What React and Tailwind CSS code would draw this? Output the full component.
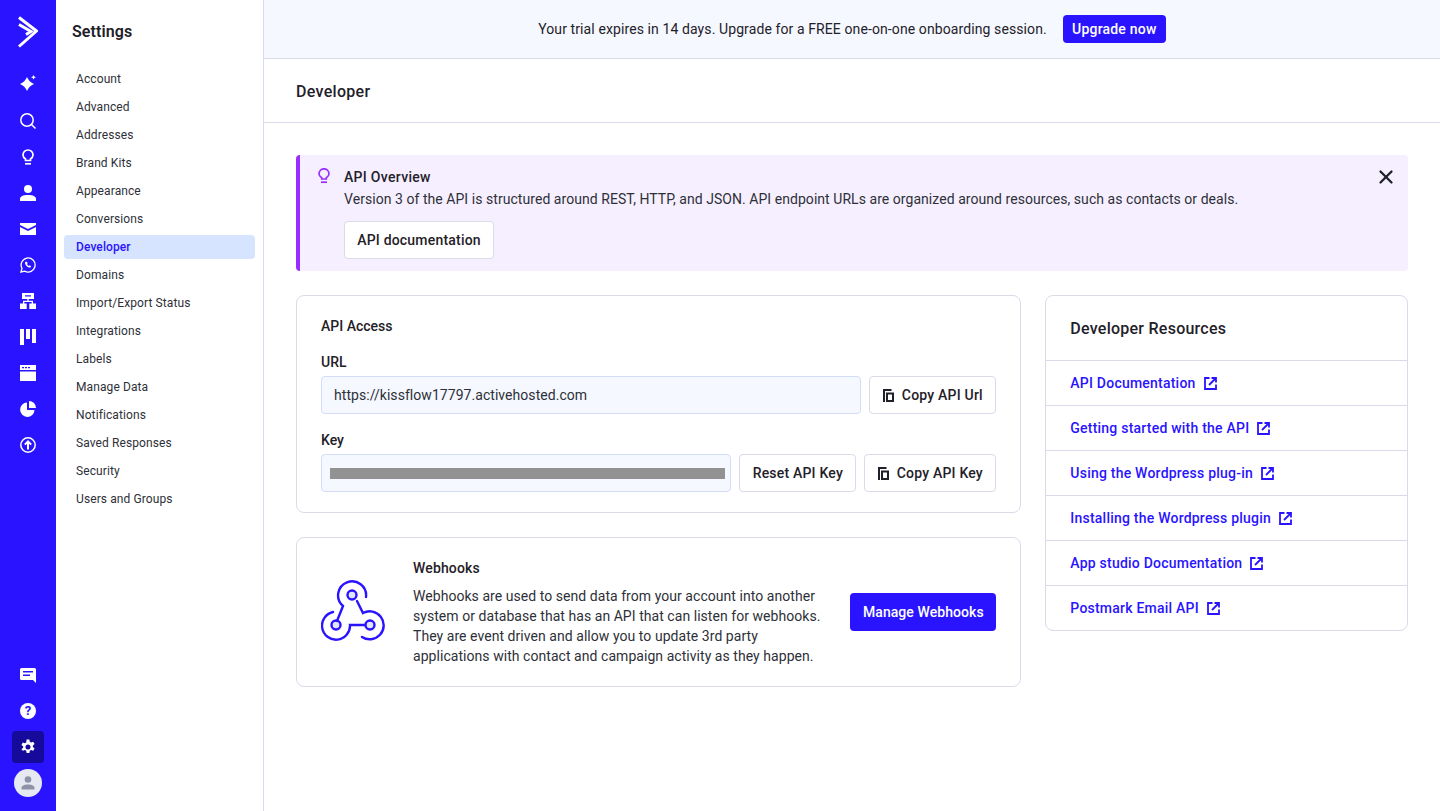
import { X } from "lucide-react";

const settingsLinks = [
  "Account",
  "Advanced",
  "Addresses",
  "Brand Kits",
  "Appearance",
  "Conversions",
  "Developer",
  "Domains",
  "Import/Export Status",
  "Integrations",
  "Labels",
  "Manage Data",
  "Notifications",
  "Saved Responses",
  "Security",
  "Users and Groups",
];

const resources = [
  "API Documentation",
  "Getting started with the API",
  "Using the Wordpress plug-in",
  "Installing the Wordpress plugin",
  "App studio Documentation",
  "Postmark Email API",
];

const Svg = ({ children, className = "w-4 h-4" }) => (
  <svg viewBox="0 0 16 16" fill="currentColor" className={className}>
    {children}
  </svg>
);

const CopyIcon = () => (
  <svg viewBox="0 0 11 13" className="w-[11px] h-[13px] text-[#1f2129]" fill="currentColor">
    <path d="M0 0h8.500v2H2v11H0z" />
    <path fillRule="evenodd" d="M3 3.500h8V13H3zm2 2V11h4V5.500z" />
  </svg>
);

const ExternalIcon = () => (
  <svg viewBox="0 0 13 13" className="w-[13px] h-[13px] shrink-0" fill="none" stroke="currentColor" strokeWidth="1.800">
    <path d="M5.500 1H1v11h11V7.500" />
    <path d="M5 8 11.500 1.500M7.500 1H12v4.500" />
  </svg>
);

const Rail = () => (
  <div className="w-14 shrink-0 bg-[#2a14ff] text-white flex flex-col items-center justify-between">
    <div className="flex flex-col items-center w-full">
      <div className="h-[63px] flex items-center justify-center">
        <svg viewBox="0 0 20 32" className="w-5 h-8" fill="none" stroke="currentColor" strokeWidth="3">
          <path d="M1 1.500 18.500 15 1 30.500" strokeLinejoin="round" />
          <path d="M1 8.500 13 15.500 8 18.500" />
        </svg>
      </div>
      <div className="h-10 flex items-center justify-center">
        <Svg>
          <path d="M7 2Q9 7 14 9 9 11 7 16 5 11 0 9 5 7 7 2z" />
          <path d="M13.500 0l.8 1.500 1.700.8-1.700.8-.8 1.500-.8-1.500-1.700-.8 1.700-.8z" />
        </Svg>
      </div>
      <div className="h-9 flex items-center justify-center">
        <svg viewBox="0 0 16 16" className="w-4 h-4" fill="none" stroke="currentColor" strokeWidth="1.500">
          <circle cx="7" cy="7" r="6.200" />
          <path d="M11.500 11.500 15.500 15.500" />
        </svg>
      </div>
      <div className="h-9 flex items-center justify-center">
        <svg viewBox="0 0 16 16" className="w-4 h-4" fill="none" stroke="currentColor" strokeWidth="1.700">
          <path d="M5.500 11.500V10C4 9 3 7.700 3 6a5 5 0 0 1 10 0c0 1.700-1 3-2.500 4v1.500z" />
          <path d="M5 14.800h6" />
        </svg>
      </div>
      <div className="h-9 flex items-center justify-center">
        <Svg>
          <circle cx="8" cy="4" r="4" />
          <path d="M0 16v-2c0-2.500 3-4 8-4s8 1.500 8 4v2z" />
        </Svg>
      </div>
      <div className="h-9 flex items-center justify-center">
        <Svg>
          <path d="M0 2h16v2l-8 4-8-4z" />
          <path d="M0 6l8 4 8-4v8H0z" />
        </Svg>
      </div>
      <div className="h-9 flex items-center justify-center">
        <svg viewBox="0 0 16 16" className="w-4 h-4" fill="none" stroke="currentColor" strokeWidth="1.300">
          <path d="M1 15l1-3.600A7 7 0 1 1 4.700 14.100z" />
          <path d="M5.500 4.700c-.8.8-.6 2.200.6 3.700 1.300 1.500 2.800 2.400 3.900 2.100.7-.2 1.100-.8 1-1.300L9.700 8.300l-.8.700c-.8-.3-1.500-1-1.900-1.900l.7-.8-.8-1.600c-.5-.1-1 0-1.400.000z" fill="currentColor" stroke="none" />
        </svg>
      </div>
      <div className="h-9 flex items-center justify-center">
        <Svg>
          <path fillRule="evenodd" d="M2 0h12v6H8.700v1.700H13v2.900h3V16H9.300v-5.400h2.400V9H4.300v1.600h2.400V16H0v-5.400h3V7.700h4.300V6H2zm3 2.300v1.200h6V2.300z" />
        </Svg>
      </div>
      <div className="h-9 flex items-center justify-center">
        <Svg>
          <path d="M0 0h4v16H0zM6 0h4v10H6zM12 0h4v14h-4z" />
        </Svg>
      </div>
      <div className="h-9 flex items-center justify-center">
        <Svg>
          <path fillRule="evenodd" d="M0 0h16v5H0zm2 2v1.200h2V2zm3 0v1.200h2V2zm3 0v1.200h2V2z" />
          <path d="M0 6.500h16V16H0z" />
        </Svg>
      </div>
      <div className="h-9 flex items-center justify-center">
        <Svg>
          <path d="M7 1.500V9h7.500A7.200 7.200 0 1 1 7 1.500z" />
          <path d="M9 0a7 7 0 0 1 7 7H9z" />
        </Svg>
      </div>
      <div className="h-9 flex items-center justify-center">
        <svg viewBox="0 0 16 16" className="w-4 h-4" fill="none" stroke="currentColor" strokeWidth="1.500">
          <circle cx="8" cy="8" r="7.200" />
          <path d="M8 12.500V4.500M4.800 7.600 8 4.500l3.200 3.100" strokeWidth="2" />
        </svg>
      </div>
    </div>
    <div className="flex flex-col items-center w-full pb-[10px]">
      <div className="h-9 flex items-center justify-center">
        <Svg>
          <path fillRule="evenodd" d="M1.500 1h13A1.500 1.500 0 0 1 16 2.500V16l-3-3H1.500A1.500 1.500 0 0 1 0 11.500v-9A1.500 1.500 0 0 1 1.500 1zM3 4v1.500h10V4zm0 3.500V9h7V7.500z" />
        </Svg>
      </div>
      <div className="h-9 flex items-center justify-center">
        <div className="w-4 h-4 rounded-full bg-white text-[#2a14ff] text-[13px] font-bold leading-4 text-center">?</div>
      </div>
      <div className="h-9 flex items-center justify-center">
        <div className="w-8 h-8 rounded bg-[#150a99] flex items-center justify-center">
          <Svg>
            <path fillRule="evenodd" d="M6.600 0h2.800l.4 2.200 1.300.7 2.100-.8 1.400 2.400-1.700 1.400v1.500l1.700 1.400-1.400 2.400-2.100-.8-1.300.7-.4 2.200H6.600l-.4-2.200-1.300-.7-2.100.8L1.400 9.600l1.700-1.400V6.700L1.400 5.300l1.400-2.400 2.100.8 1.300-.7zM8 5a2.500 2.500 0 1 0 0 5 2.500 2.500 0 0 0 0-5z" transform="translate(0 .6)" />
          </Svg>
        </div>
      </div>
      <div className="h-9 flex items-center justify-center">
        <div className="w-7 h-7 rounded-full bg-[#e6e9f2] flex items-center justify-center text-[#8d92a6]">
          <Svg>
            <circle cx="8" cy="4.500" r="3.300" />
            <path d="M1.500 14.500V13c0-2 2.500-3.500 6.500-3.500s6.500 1.500 6.500 3.500v1.500z" />
          </Svg>
        </div>
      </div>
    </div>
  </div>
);

const SettingsNav = () => (
  <div className="w-[208px] shrink-0 border-r border-[#d9dbe8] px-2">
    <div className="pl-2 pt-[22px] h-[65px] text-base font-semibold leading-5 tracking-[0.1px] text-[#1f2129]">Settings</div>
    <div className="flex flex-col">
      {settingsLinks.map((name) => (
        <div key={name} className="h-7 flex items-center">
          <div
            className={
              name === "Developer"
                ? "w-[191px] h-6 rounded px-3 flex items-center text-xs font-medium tracking-[0.1px] bg-[#d6e4ff] text-[#2a14ff]"
                : "w-[191px] h-6 rounded px-3 flex items-center text-xs tracking-[0.1px] text-[#2e3038]"
            }
          >
            {name}
          </div>
        </div>
      ))}
    </div>
  </div>
);

const Button = ({ children, className = "" }) => (
  <div className={`h-[38px] rounded border border-[#d9dbe8] bg-white flex items-center justify-center gap-2 whitespace-nowrap text-sm font-medium tracking-[0.2px] text-[#1f2129] ${className}`}>
    {children}
  </div>
);

const ApiAccess = () => (
  <div className="h-[218px] rounded-lg border border-[#d9dbe8] px-6 pt-5">
    <div className="text-sm font-medium leading-5 text-[#1f2129]">API Access</div>
    <div className="mt-4 text-sm font-medium leading-5 text-[#1f2129]">URL</div>
    <div className="mt-1 flex gap-2">
      <div className="flex-1 h-[38px] rounded border border-[#d3ddf7] bg-[#f5f8ff] px-3 flex items-center text-sm tracking-[0.05px] text-[#2e3038]">
        https://kissflow17797.activehosted.com
      </div>
      <Button className="w-[127px]">
        <CopyIcon />
        Copy API Url
      </Button>
    </div>
    <div className="mt-4 text-sm font-medium leading-5 text-[#1f2129]">Key</div>
    <div className="mt-1 flex gap-2">
      <div className="flex-1 h-[38px] rounded border border-[#d3ddf7] bg-[#f5f8ff] pl-2 pr-[5px] flex items-center">
        <div className="w-full h-[11px] bg-[#929292]" />
      </div>
      <Button className="w-[117px]">Reset API Key</Button>
      <Button className="w-[132px]">
        <CopyIcon />
        Copy API Key
      </Button>
    </div>
  </div>
);

const Webhooks = () => (
  <div className="h-[150px] rounded-lg border border-[#d9dbe8] px-6 flex items-center">
    <svg viewBox="0 0 64 62" className="w-16 h-[62px] -mt-1 shrink-0 text-[#2a14ff]" fill="none" stroke="currentColor" strokeWidth="2.400" strokeLinecap="round">
      <circle cx="31" cy="16" r="4.500" fill="#e0e6ff" />
      <circle cx="15" cy="46" r="4.500" fill="#e0e6ff" />
      <circle cx="49" cy="46" r="4.500" fill="#e0e6ff" />
      <path d="M45 18A14 14 0 1 0 22 27L16 42" />
      <path d="M36 22 42 34A14 14 0 1 1 41 58" />
      <path d="M12 33A14 14 0 1 0 29 46H44" />
    </svg>
    <div className="ml-7 w-[412px]">
      <div className="text-sm font-medium leading-5 tracking-[0.15px] text-[#1f2129]">Webhooks</div>
      <p className="mt-2 text-sm leading-5 tracking-[0.05px] text-[#2e3038]">
        Webhooks are used to send data from your account into another system or database that has an API that can listen for webhooks. They are event driven and allow you to update 3rd party applications with contact and campaign activity as they happen.
      </p>
    </div>
    <div className="ml-auto w-[146px] h-[38px] rounded bg-[#2a14ff] text-white text-sm font-medium tracking-[0.07px] flex items-center justify-center whitespace-nowrap">Manage Webhooks</div>
  </div>
);

const Resources = () => (
  <div className="rounded-lg border border-[#d9dbe8] self-start">
    <div className="h-[64px] px-6 pt-[2px] flex items-center text-base font-medium tracking-[0.25px] text-[#1f2129]">Developer Resources</div>
    {resources.map((name) => (
      <div key={name} className="h-[45px] px-6 flex items-center gap-2 border-t border-[#d9dbe8] text-sm font-medium tracking-[0.22px] text-[#2a14ff]">
        {name}
        <ExternalIcon />
      </div>
    ))}
  </div>
);

export default function App() {
  return (
    <div className="h-[811px] flex bg-white overflow-hidden font-['Roboto',sans-serif]">
      <Rail />
      <SettingsNav />
      <div className="flex-1 min-w-0">
        <div className="h-[59px] bg-[#f5f8ff] border-b border-[#d9dbe8] flex items-center justify-center gap-4">
          <span className="text-sm tracking-[0.1px] text-[#1f2129]">Your trial expires in 14 days. Upgrade for a FREE one-on-one onboarding session.</span>
          <div className="w-[103px] h-7 rounded bg-[#2a14ff] text-white text-sm font-medium tracking-[0.2px] flex items-center justify-center">Upgrade now</div>
        </div>
        <div className="h-[64px] px-8 pt-[2px] border-b border-[#d9dbe8] flex items-center text-base font-medium tracking-[0.3px] text-[#1f2129]">Developer</div>
        <div className="px-8 pt-8">
          <div className="h-[116px] rounded border-l-4 border-[#9a2cff] bg-[#f6efff] flex pl-4 pr-[11px] pt-3">
            <svg viewBox="0 0 16 16" className="w-4 h-4 mt-[1px] text-[#9a2cff]" fill="none" stroke="currentColor" strokeWidth="1.700">
              <path d="M5.700 11V9.700C4.300 8.900 3 7.600 3 5.800a5 5 0 0 1 10 0c0 1.800-1.300 3.100-2.700 3.900V11z" />
              <path d="M5 14.200h6" />
            </svg>
            <div className="ml-3 flex-1">
              <div className="text-sm font-medium leading-5 tracking-[0.3px] text-[#1f2129]">API Overview</div>
              <div className="mt-[2px] text-sm leading-5 tracking-[0.05px] text-[#2e3038]">
                Version 3 of the API is structured around REST, HTTP, and JSON. API endpoint URLs are organized around resources, such as contacts or deals.
              </div>
              <Button className="mt-3 w-[150px]">API documentation</Button>
            </div>
            <X className="w-[22px] h-[22px] -mt-px text-[#1f2129]" strokeWidth={2.500} />
          </div>
          <div className="mt-6 grid grid-cols-[2fr_1fr] gap-6">
            <div className="flex flex-col gap-6">
              <ApiAccess />
              <Webhooks />
            </div>
            <Resources />
          </div>
        </div>
      </div>
    </div>
  );
}
